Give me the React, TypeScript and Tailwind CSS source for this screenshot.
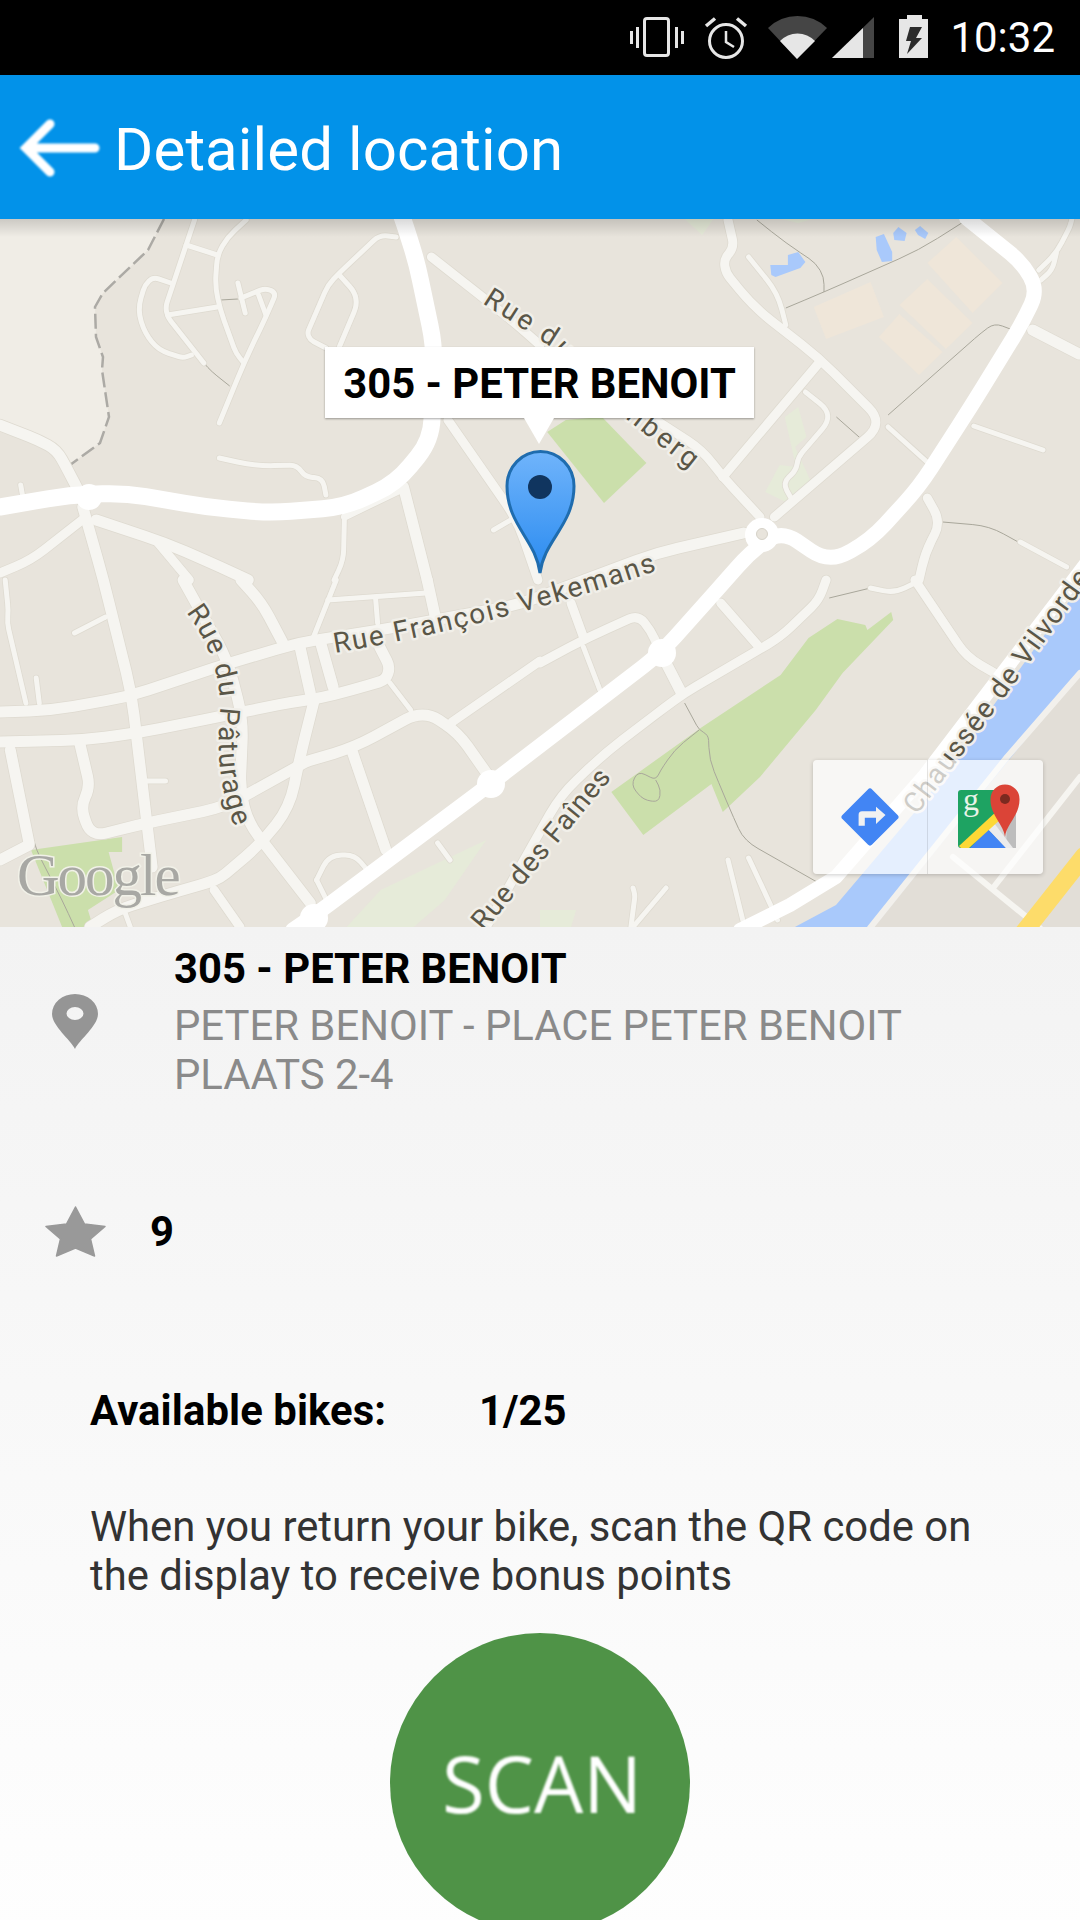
import React from "react";

type P = [number, number];
const X = (x: number) => (x <= 522 ? x * 1.0345 : x < 540 ? 540 : 540 + (x - 540) * 1.0328);
const smooth = (pts: P[]) => {
  const q = pts.map(([x, y]) => [X(x), y] as P);
  let d = `M${q[0][0].toFixed(1)} ${q[0][1]}`;
  for (let i = 1; i < q.length - 1; i++) {
    const [ax, ay] = q[i - 1];
    const [bx, by] = q[i];
    const [cx, cy] = q[i + 1];
    const l1 = Math.hypot(bx - ax, by - ay);
    const l2 = Math.hypot(cx - bx, cy - by);
    const r = Math.min(22, l1 / 2, l2 / 2);
    const sx = bx + ((ax - bx) / l1) * r;
    const sy = by + ((ay - by) / l1) * r;
    const ex = bx + ((cx - bx) / l2) * r;
    const ey = by + ((cy - by) / l2) * r;
    d += ` L${sx.toFixed(1)} ${sy.toFixed(1)} Q${bx.toFixed(1)} ${by} ${ex.toFixed(1)} ${ey.toFixed(1)}`;
  }
  const l = q[q.length - 1];
  return d + ` L${l[0].toFixed(1)} ${l[1]}`;
};
const poly = (pts: P[]) => pts.map(([x, y]) => `${X(x).toFixed(1)},${y}`).join(" ");

const thin: P[][] = [
  [[213, 300], [230, 299]],
  [[197, 363], [205, 372], [222, 386]],
  [[750, 220], [778, 243], [807, 263], [815, 277], [815, 292]],
  [[778, 308], [815, 292], [907, 250], [953, 220]],
  [[827, 417], [850, 438]],
  [[877, 415], [967, 333], [980, 323], [1003, 332]],
  [[930, 522], [975, 526], [1003, 542]],
  [[820, 598], [860, 588]],
  [[680, 703], [694, 730], [703, 735], [704, 760], [720, 800], [735, 835], [745, 845], [815, 886]],
  [[694, 730], [670, 750], [657, 770], [652, 780], [635, 771], [628, 785], [640, 800], [655, 802], [657, 790], [652, 780]],
  [[15, 750], [30, 830], [35, 850], [60, 900], [72, 927]],
];

const minor: [number, P[]][] = [
  [5, [[188, 220], [180, 245], [160, 307], [162, 317], [197, 363]]],
  [5, [[180, 245], [210, 255]]],
  [5, [[238, 220], [220, 237], [210, 255], [208, 287], [213, 310], [228, 353], [235, 362]]],
  [5, [[165, 283], [148, 277], [140, 285], [133, 310], [140, 333], [153, 350], [177, 358], [185, 355]]],
  [5, [[162, 315], [210, 307]]],
  [5, [[230, 283], [237, 313]]],
  [5, [[233, 298], [257, 288], [267, 293], [257, 317], [237, 360], [212, 423]]],
  [5, [[250, 295], [257, 315]]],
  [5, [[383, 237], [367, 235], [328, 273], [317, 285], [297, 333], [300, 340], [315, 348]]],
  [5, [[328, 275], [348, 298], [328, 347]]],
  [9, [[417, 257], [470, 300], [500, 325], [522, 345]]],
  [9, [[433, 420], [500, 520], [520, 580]]],
  [9, [[622, 400], [697, 450], [717, 477], [753, 517]]],
  [5, [[212, 458], [247, 466], [287, 465], [295, 477], [312, 478], [315, 495]]],
  [11, [[0, 425], [37, 440], [55, 450], [67, 473], [77, 493]]],
  [5, [[20, 485], [22, 497]]],
  [11, [[80, 507], [100, 580], [127, 693], [147, 867]]],
  [9, [[83, 517], [30, 560], [0, 573]]],
  [11, [[93, 520], [160, 543], [213, 567], [240, 580]]],
  [9, [[153, 543], [183, 580]]],
  [11, [[390, 487], [413, 580]]],
  [5, [[333, 513], [332, 560], [323, 580]]],
  [7, [[387, 490], [333, 517]]],
  [5, [[477, 530], [497, 518]]],
  [11, [[177, 580], [220, 660], [235, 720], [232, 790], [240, 823], [300, 903]]],
  [11, [[233, 580], [253, 603], [273, 642]]],
  [11, [[0, 712], [50, 710], [123, 697], [207, 668], [287, 643], [367, 630], [500, 605], [653, 553], [737, 533]]],
  [11, [[0, 742], [80, 740], [133, 733], [210, 717], [283, 702], [310, 698], [340, 690], [373, 680], [377, 667], [367, 647]]],
  [11, [[290, 647], [300, 693]]],
  [11, [[310, 643], [322, 687]]],
  [5, [[363, 597], [365, 623]]],
  [5, [[317, 600], [412, 593]]],
  [5, [[325, 580], [303, 637]]],
  [11, [[413, 580], [422, 623]]],
  [11, [[303, 703], [290, 757], [280, 807], [253, 843], [213, 878], [200, 883], [153, 897], [113, 910], [87, 927]]],
  [11, [[10, 750], [28, 843]]],
  [11, [[0, 860], [28, 845]]],
  [5, [[5, 580], [8, 610], [7, 623], [25, 703]]],
  [5, [[35, 678], [38, 703]]],
  [5, [[72, 633], [102, 617]]],
  [11, [[77, 743], [87, 787], [78, 807], [88, 837], [133, 825], [217, 807], [287, 767], [295, 762], [343, 747], [400, 715], [417, 715], [443, 733], [473, 777]]],
  [5, [[142, 781], [160, 781]]],
  [11, [[340, 750], [373, 850]]],
  [5, [[397, 710], [377, 683]]],
  [9, [[437, 722], [522, 661]]],
  [9, [[817, 580], [810, 600], [773, 637], [748, 652], [680, 693], [660, 708], [603, 753], [560, 795], [470, 927]]],
  [9, [[540, 663], [587, 637], [635, 615], [647, 630], [657, 653]]],
  [9, [[570, 603], [582, 637]]],
  [5, [[582, 647], [598, 690]]],
  [9, [[715, 603], [753, 648]]],
  [11, [[658, 655], [677, 693]]],
  [9, [[903, 580], [953, 657], [980, 673]]],
  [5, [[860, 588], [883, 593], [903, 583]]],
  [9, [[722, 220], [728, 247], [718, 260], [720, 273], [747, 307], [810, 358], [873, 423], [767, 517]]],
  [9, [[810, 363], [717, 477]]],
  [5, [[742, 257], [770, 293], [778, 325]]],
  [5, [[797, 392], [825, 415], [790, 457], [788, 470], [775, 483], [783, 498]]],
  [5, [[877, 427], [918, 465]]],
  [9, [[915, 498], [928, 522], [913, 553], [907, 580]]],
  [5, [[960, 426], [1027, 450]]],
  [5, [[1005, 542], [1050, 567]]],
  [11, [[1017, 330], [1062, 354]]],
  [5, [[1023, 270], [1040, 253], [1053, 227], [1055, 219]]],
  [5, [[1025, 280], [1036, 270], [1040, 253]]],
  [5, [[423, 843], [435, 860]]],
  [5, [[306, 880], [318, 855], [343, 855], [355, 870]]],
  [5, [[306, 880], [318, 905]]],
  [9, [[207, 890], [232, 927]]],
  [5, [[120, 910], [126, 927]]],
  [5, [[722, 860], [738, 927]]],
  [5, [[742, 858], [752, 880], [770, 920]]],
  [5, [[630, 888], [632, 895], [628, 927]]],
  [5, [[662, 888], [630, 927]]],
];

const main: [number, P[]][] = [
  [17, [[0, 507], [67, 495], [120, 493], [200, 507], [260, 513], [333, 507], [383, 483], [417, 440], [420, 347], [403, 263], [393, 230], [388, 215]]],
  [15, [[283, 930], [307, 913], [475, 783], [657, 653], [720, 580], [743, 553], [773, 530], [820, 563], [860, 540], [907, 487], [957, 407], [1007, 323], [1022, 290], [1007, 263], [953, 218]]],
];

const MapLabel = ({ id, d, text, spacing = 1.7 }: { id: string; d: string; text: string; spacing?: number }) => (
  <g>
    <path id={id} d={d} fill="none" />
    <text
      fontFamily="Roboto, sans-serif"
      fontSize="28"
      fill="#5a5647"
      stroke="#f1efe9"
      strokeWidth="5"
      strokeLinejoin="round"
      letterSpacing={spacing}
      style={{ paintOrder: "stroke" }}
    >
      <textPath href={`#${id}`}>{text}</textPath>
    </text>
  </g>
);

const MapCanvas = () => (
  <svg viewBox="0 219 1080 708" className="block h-full w-full">
    <defs>
      <linearGradient id="pinFill" x1="0" y1="0" x2="0" y2="1">
        <stop offset="0" stopColor="#70b4fb" />
        <stop offset="1" stopColor="#2a8bf0" />
      </linearGradient>
    </defs>
    <rect x="0" y="219" width="1080" height="708" fill="#e8e4dc" />
    <polygon
      fill="#f0ede6"
      points="0,219 164,219 148,250 103,293 95,307 96,337 103,357 102,370 109,417 100,443 70,465 40,440 0,425"
    />
    <polyline
      points="164,219 148,250 103,293 95,307 96,337 103,357 102,370 109,417 100,443 70,465"
      fill="none"
      stroke="#acaaa5"
      strokeWidth="2.5"
      strokeDasharray="15 5"
    />
    <polygon fill="#e2ded7" points="1080,660 873,928 1080,928" />
    <polygon fill="#cbdfab" points={poly([[547, 432], [565, 420], [600, 417], [643, 463], [602, 503]])} />
    <polygon fill="#e6ebd9" points={poly([[777, 417], [790, 407], [798, 437], [787, 447], [803, 483], [780, 503], [758, 492], [772, 465], [788, 467]])} />
    <polygon fill="#e6ebd9" points={poly([[680, 219], [708, 219], [697, 235]])} />
    <polygon fill="#e6ebd9" points={poly([[773, 219], [805, 219], [790, 223]])} />
    <polygon fill="#e6ebd9" points={poly([[540, 910], [575, 910], [570, 927], [540, 927]])} />
    <polygon fill="#e6ebd9" points={poly([[335, 927], [368, 890], [470, 840], [430, 900], [400, 927]])} />
    <polygon
      fill="#cbdfab"
      points={poly([[828, 619], [855, 625], [857, 630], [880, 612], [882, 620], [833, 673], [807, 710], [753, 777], [717, 812], [706, 784], [640, 835], [609, 792], [697, 727], [773, 675], [800, 638]])}
    />
    <polygon fill="#cbdfab" points={poly([[30, 850], [118, 837], [118, 852], [105, 852], [115, 890], [85, 910], [90, 927], [60, 927]])} />
    <g fill="#efe6d9">
      <polygon points={poly([[805, 307], [860, 282], [873, 317], [817, 339]])} />
      <polygon points={poly([[888, 305], [915, 279], [959, 323], [933, 349]])} />
      <polygon points={poly([[868, 337], [888, 314], [930, 352], [907, 375]])} />
      <polygon points={poly([[915, 263], [943, 237], [988, 283], [959, 313]])} />
    </g>
    <g fill="#a9c9fb">
      <polygon points={poly([[763, 265], [780, 265], [780, 255], [790, 252], [797, 262], [792, 268], [768, 277], [764, 275]])} />
      <polygon points={poly([[865, 237], [873, 234], [881, 252], [881, 261], [871, 262], [866, 250]])} />
      <polygon points={poly([[882, 233], [887, 227], [895, 233], [893, 241], [883, 240]])} />
      <polygon points={poly([[903, 230], [908, 226], [916, 233], [913, 239], [906, 235]])} />
    </g>
    <polygon fill="#a9c9fb" points="793,928 836,905 925,800 1080,586 1080,672 873,928" />
    <g fill="none" stroke="#a9a79b" strokeWidth="1">
      {thin.map((p, i) => (
        <path key={i} d={smooth(p)} />
      ))}
    </g>
    <g fill="none" strokeLinecap="round" strokeLinejoin="round">
      {minor.map(([w, p], i) => (
        <path key={i} d={smooth(p)} stroke="#dedad0" strokeWidth={w + 1.5} />
      ))}
      {minor.map(([w, p], i) => (
        <path key={i} d={smooth(p)} stroke="#f6f5f1" strokeWidth={w} />
      ))}
      <path d="M870 928 L1007 757 L1080 673" stroke="#f2f0ec" strokeWidth="6" />
      <path d="M993 888 L1080 777" stroke="#f6f5f1" strokeWidth="6" />
      <path d="M953 857 L1040 928" stroke="#f6f5f1" strokeWidth="6" />
      <path d="M1024 932 L1084 856" stroke="#fddc6a" strokeWidth="18" />
      {main.map(([w, p], i) => (
        <path key={i} d={smooth(p)} stroke="#ffffff" strokeWidth={w} />
      ))}
      <path d="M740 930 L790 905 L836 877 L925 775 L1085 565" stroke="#ffffff" strokeWidth="14" />
    </g>
    <circle cx="89" cy="497" r="13" fill="#fff" />
    <circle cx="491" cy="784" r="14" fill="#fff" />
    <circle cx="662" cy="653" r="14" fill="#fff" />
    <circle cx="314" cy="918" r="14" fill="#fff" />
    <circle cx="762" cy="535" r="17" fill="#fff" />
    <circle cx="762" cy="534" r="5.5" fill="#e8e4dc" stroke="#d6d2c8" />
    <MapLabel id="l1" d="M482 303 L548 345 L602 400 L710 485" text="Rue du Keyenberg" spacing={2.9} />
    <MapLabel id="l2" d="M335 653 Q500 625 665 568" text="Rue François Vekemans" />
    <MapLabel id="l3" d="M186 612 Q222 660 220 713 Q214 780 236 830" text="Rue du Pâturage" spacing={1.4} />
    <MapLabel id="l4" d="M484 932 L620 768" text="Rue des Faînes" spacing={0.9} />
    <MapLabel id="l5" d="M917 815 Q1000 705 1100 565" text="Chaussée de Vilvorde" spacing={1.4} />
    <text
      x="17"
      y="895"
      fontFamily="'Liberation Serif', serif"
      fontSize="59"
      letterSpacing="-2"
      fill="#a8a8a4"
      stroke="#f1f1e8"
      strokeWidth="3"
      style={{ paintOrder: "stroke" }}
    >
      Google
    </text>
    <path
      d="M540 573 C536 540 507 525 507 486 A33 34 0 0 1 574 486 C574 525 544 540 540 573 Z"
      fill="url(#pinFill)"
      stroke="#1f6cae"
      strokeWidth="3"
    />
    <circle cx="540" cy="487" r="12" fill="#10355f" />
  </svg>
);

const StatusIcons = () => (
  <svg width="300" height="75" viewBox="630 0 300 75" className="block">
    <g fill="#e6e6e6">
      <rect x="630" y="31" width="3" height="13" />
      <rect x="636" y="27" width="3" height="21" />
      <rect x="675" y="27" width="3" height="21" />
      <rect x="681" y="31" width="3" height="13" />
    </g>
    <rect x="644.5" y="18.5" width="24" height="37" rx="2.5" fill="none" stroke="#e6e6e6" strokeWidth="3" />
    <g fill="none" stroke="#e6e6e6" strokeWidth="3">
      <circle cx="726" cy="41" r="16.5" />
      <path d="M726 31 V42 L734 47" strokeWidth="2.5" />
      <path d="M706 26 L715 18.5" strokeWidth="3.5" />
      <path d="M746 26 L737 18.5" strokeWidth="3.5" />
    </g>
    <path d="M768 28 A42 42 0 0 1 827 28 L797 59 Z" fill="#454545" />
    <path d="M780 41 A24 24 0 0 1 815 41 L797 59 Z" fill="#e6e6e6" />
    <path d="M832 58 L874 17 V58 Z" fill="#454545" />
    <path d="M832 58 L863 28 V58 Z" fill="#e6e6e6" />
    <path d="M907 15 H922 V19 H928 V58 H899 V19 H907 Z" fill="#e6e6e6" />
    <path d="M910 27 H922 L916 38 H922 L907 54 L911 41 H906 Z" fill="#2b2b2b" />
  </svg>
);

const DirectionsIcon = () => (
  <svg width="60" height="60" viewBox="0 0 60 60" className="block">
    <rect x="9" y="9" width="42" height="42" rx="3" transform="rotate(45 30 30)" fill="#4285f4" />
    <path d="M18.6 38.7 V28 Q18.6 24.3 22 24.3 H36 V19.7 L45.5 28 L36 37 V30.7 H24.8 V38.7 Z" fill="#f1f1f1" />
  </svg>
);

const GoogleMapsIcon = () => (
  <svg width="66" height="66" viewBox="-2 -6 66 66" className="block">
    <rect x="0" y="0" width="58" height="58" rx="3" fill="#1ea362" />
    <path d="M58 0 V58 H47 L28 37 L50 14 Z" fill="#d4d4d4" />
    <path d="M50 16 L58 24 V58 H48 Z" fill="#bdbdbd" />
    <path d="M12 58 L30 39 L48 58 Z" fill="#4285f4" />
    <path d="M30 39 L36 33 L55 58 H48 Z" fill="#ececec" />
    <path d="M1 56 L40 20 L44 28 L11 58 H3 Z" fill="#fdd835" />
    <text x="5" y="20" fontFamily="'Liberation Serif', serif" fontSize="32" fill="#e8f3e8">
      g
    </text>
    <path
      d="M47 47 C46 35 32 25 32.5 9 A14.5 14.5 0 0 1 61.5 9 C62 25 48 35 47 47 Z"
      fill="#db4437"
    />
    <circle cx="47" cy="9" r="5" fill="#7b2a20" />
  </svg>
);

export default function App() {
  return (
    <div className="relative flex h-[1920px] w-[1080px] flex-col overflow-hidden bg-[#f3f3f3] [font-family:Roboto,sans-serif]">
      <div className="flex h-[75px] shrink-0 items-center justify-end bg-black pr-[25px]">
        <StatusIcons />
        <span className="ml-[20px] text-[42px] leading-none text-white">10:32</span>
      </div>

      <div className="flex h-[144px] shrink-0 items-center bg-[#0292e9]">
        <svg width="114" height="144" viewBox="0 0 114 144" className="block shrink-0 blur-[0.8px]">
          <path
            d="M95 73 H27 M50 49 L26 73 L50 97"
            fill="none"
            stroke="#ffffff"
            strokeWidth="9"
            strokeLinecap="round"
            strokeLinejoin="miter"
          />
        </svg>
        <span className="mt-[5px] text-[60px] leading-none font-normal tracking-[0.1px] text-white">Detailed location</span>
      </div>

      <div className="relative h-[708px] shrink-0 overflow-hidden">
        <MapCanvas />
        <div className="absolute inset-x-0 top-0 h-[18px] bg-linear-to-b from-black/15 to-transparent" />
        <div className="absolute top-[128px] left-[325px] flex h-[71px] w-[429px] items-center justify-center bg-white shadow-[0_1px_2px_rgba(0,0,0,0.35)]">
          <span className="mt-[3px] text-[41.8px] leading-none font-bold text-black">305 - PETER BENOIT</span>
          <div className="absolute top-full left-[199px] h-0 w-0 border-x-[15px] border-t-[26px] border-x-transparent border-t-white" />
        </div>
        <div className="absolute top-[541px] left-[813px] flex h-[114px] w-[230px] rounded-[4px] bg-white/70 shadow-[0_1px_4px_rgba(0,0,0,0.2)]">
          <div className="flex w-[115px] items-center justify-center border-r border-black/10">
            <DirectionsIcon />
          </div>
          <div className="flex w-[115px] items-center justify-center pl-[6px]">
            <GoogleMapsIcon />
          </div>
        </div>
      </div>

      <div className="flex flex-1 flex-col bg-linear-to-b from-[#f3f3f3] to-[#fefefe]">
        <div className="flex items-center pt-[17px]">
          <div className="flex w-[150px] shrink-0 justify-center">
            <svg width="48" height="56" viewBox="0 0 48 56" className="block blur-[0.4px]">
              <path
                fillRule="evenodd"
                d="M24 55 C20 46 1 32 1 20 A23 20 0 0 1 47 20 C47 32 28 46 24 55 Z M24 13 A8.5 6.5 0 1 0 24 26 A8.5 6.5 0 1 0 24 13 Z"
                fill="#959595"
              />
            </svg>
          </div>
          <div className="ml-[24px] flex flex-col">
            <span className="text-[41.8px] leading-[49px] font-bold text-black">305 - PETER BENOIT</span>
            <span className="mt-[8px] text-[41.8px] leading-[49px] text-[#8a8a8a]">
              PETER BENOIT - PLACE PETER BENOIT
              <br />
              PLAATS 2-4
            </span>
          </div>
        </div>

        <div className="mt-[108px] flex h-[49px] items-center">
          <div className="flex w-[150px] shrink-0 justify-center">
            <svg width="61" height="52" viewBox="0 0 61 52" className="block">
              <path
                d="M30.5 1 L39.5 18 L60 20.5 L45.5 33 L49.5 50 L30.5 42 L11.5 50 L15.5 33 L1 20.5 L21.5 18 Z"
                fill="#999999"
                stroke="#999999"
                strokeWidth="1.5"
                strokeLinejoin="round"
              />
            </svg>
          </div>
          <span className="text-[41.8px] leading-[49px] font-bold text-black">9</span>
        </div>

        <div className="mt-[130px] flex pl-[90px] text-[41.8px] leading-[49px] font-bold text-black">
          <span className="w-[389px] tracking-[0.1px]">Available bikes:</span>
          <span>1/25</span>
        </div>

        <p className="mt-[67px] pr-[80px] pl-[90px] text-[41.8px] leading-[49px] text-[#333333]">
          When you return your bike, scan the QR code on the display to receive bonus points
        </p>

        <div className="mt-[33px] flex justify-center">
          <div className="flex h-[300px] w-[300px] shrink-0 items-center justify-center rounded-full bg-[#4f9347]">
            <span className="ml-[4px] text-[78px] leading-none font-normal text-white blur-[1px] [font-family:'Open_Sans',sans-serif]">
              SCAN
            </span>
          </div>
        </div>
      </div>
    </div>
  );
}
